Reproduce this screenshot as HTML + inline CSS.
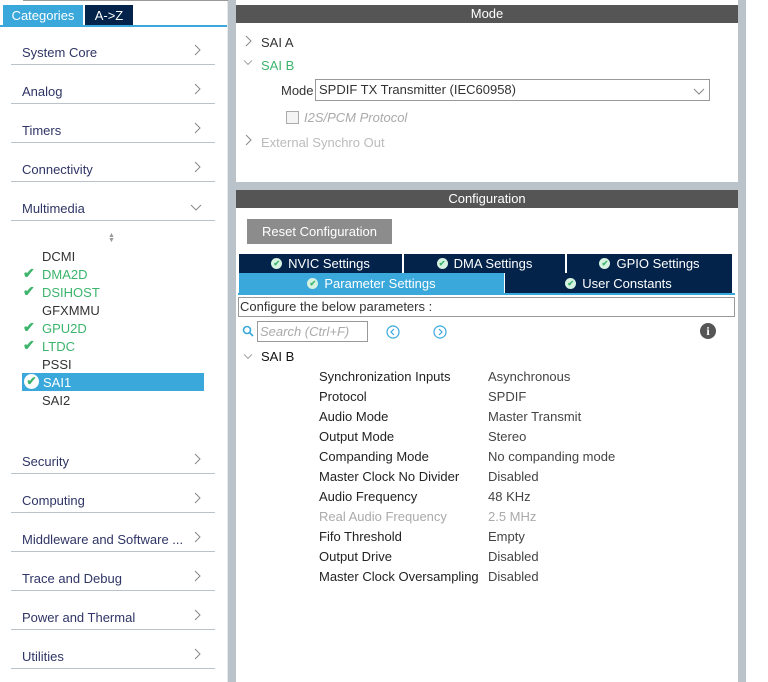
<!DOCTYPE html><html><head><style>
body{margin:0;width:768px;height:682px;position:relative;background:#fff;font-family:"Liberation Sans",sans-serif;overflow:hidden}
.a{position:absolute}
.cat{position:absolute;left:22px;font-size:13px;color:#2f3566}
.ln{position:absolute;left:11px;width:204px;height:1px;background:#b9c3c9}
.chev{position:absolute;left:192px;width:10px;height:12px}
.sub{position:absolute;left:42px;font-size:13px;color:#333}
.g{color:#3cb46c}
.ck{position:absolute;left:23px;font-size:14px;color:#3cb46c;font-weight:bold}
.tab{position:absolute;height:19px;background:#03234b;color:#fff;font-size:13px;display:flex;align-items:center;justify-content:center}
.dot{display:inline-block;width:11px;height:11px;border-radius:50%;background:#d6f2e0;color:#3cb46c;font-size:8px;line-height:11px;text-align:center;margin-right:6px;font-weight:bold}
.pl{position:absolute;left:319px;font-size:13px;color:#222}
.pv{position:absolute;left:488px;font-size:13px;color:#444}
</style></head><body>
<svg width="0" height="0" style="position:absolute"><defs>
<symbol id="r" viewBox="0 0 10 12"><path d="M3 1 L8 6 L3 11" fill="none" stroke="#888" stroke-width="1"/></symbol>
<symbol id="d" viewBox="0 0 12 10"><path d="M1 3 L6 8 L11 3" fill="none" stroke="#888" stroke-width="1"/></symbol>
</defs></svg>
<div class="a" style="left:0;top:0;width:227px;height:682px;background:#fff;border-right:2px solid #e6e8ea"></div>
<div class="a" style="left:23px;top:0;width:205px;height:1px;background:#999"></div>
<div class="a" style="left:228px;top:0;width:8px;height:682px;background:#b9c3c9"></div>
<div class="a" style="left:738px;top:0;width:8px;height:682px;background:#b9c3c9"></div>
<div class="a" style="left:236px;top:182px;width:502px;height:8px;background:#b9c3c9"></div>
<div class="a" style="left:3px;top:5px;width:80px;height:21px;background:#3aa8db;color:#fff;font-size:13px;line-height:21px;text-align:center">Categories</div>
<div class="a" style="left:85px;top:5px;width:48px;height:21px;background:#03234b;color:#fff;font-size:13px;line-height:21px;text-align:center">A-&gt;Z</div>
<div class="a" style="left:0;top:25px;width:227px;height:2px;background:#3aa8db"></div>

<div class="cat" style="top:45px">System Core</div><svg class="chev" style="top:44px"><use href="#r"/></svg><div class="ln" style="top:64px"></div>
<div class="cat" style="top:84px">Analog</div><svg class="chev" style="top:83px"><use href="#r"/></svg><div class="ln" style="top:103px"></div>
<div class="cat" style="top:123px">Timers</div><svg class="chev" style="top:122px"><use href="#r"/></svg><div class="ln" style="top:142px"></div>
<div class="cat" style="top:162px">Connectivity</div><svg class="chev" style="top:161px"><use href="#r"/></svg><div class="ln" style="top:181px"></div>
<div class="cat" style="top:201px">Multimedia</div><svg class="a" style="left:190px;top:202px;width:12px;height:10px"><use href="#d"/></svg><div class="ln" style="top:220px"></div>
<div class="a" style="left:108px;top:233px;font-size:7px;color:#999;line-height:5px">▲<br>▼</div>
<div class="sub" style="top:249px">DCMI</div>
<div class="ck" style="top:265px">✔</div><div class="sub g" style="top:267px">DMA2D</div>
<div class="ck" style="top:283px">✔</div><div class="sub g" style="top:285px">DSIHOST</div>
<div class="sub" style="top:303px">GFXMMU</div>
<div class="ck" style="top:319px">✔</div><div class="sub g" style="top:321px">GPU2D</div>
<div class="ck" style="top:337px">✔</div><div class="sub g" style="top:339px">LTDC</div>
<div class="sub" style="top:357px">PSSI</div>
<div class="a" style="left:22px;top:373px;width:182px;height:18px;background:#3aa8db"></div>
<div class="a" style="left:24px;top:374px;width:15px;height:15px;border-radius:50%;background:#fff;color:#3cb46c;font-size:12px;line-height:15px;text-align:center;font-weight:bold">✔</div>
<div class="sub" style="top:375px;left:43px;color:#fff">SAI1</div>
<div class="sub" style="top:393px">SAI2</div>

<div class="cat" style="top:454px">Security</div><svg class="chev" style="top:453px"><use href="#r"/></svg><div class="ln" style="top:473px"></div>
<div class="cat" style="top:493px">Computing</div><svg class="chev" style="top:492px"><use href="#r"/></svg><div class="ln" style="top:512px"></div>
<div class="cat" style="top:532px">Middleware and Software ...</div><svg class="chev" style="top:531px"><use href="#r"/></svg><div class="ln" style="top:551px"></div>
<div class="cat" style="top:571px">Trace and Debug</div><svg class="chev" style="top:570px"><use href="#r"/></svg><div class="ln" style="top:590px"></div>
<div class="cat" style="top:610px">Power and Thermal</div><svg class="chev" style="top:609px"><use href="#r"/></svg><div class="ln" style="top:629px"></div>
<div class="cat" style="top:649px">Utilities</div><svg class="chev" style="top:648px"><use href="#r"/></svg><div class="ln" style="top:668px"></div>

<div class="a" style="left:236px;top:5px;width:502px;height:18px;background:#545554;color:#fff;font-size:13px;line-height:18px;text-align:center">Mode</div>
<svg class="a" style="left:243px;top:35px;width:10px;height:12px"><use href="#r"/></svg><div class="a" style="left:261px;top:35px;font-size:13px;color:#333">SAI A</div>
<svg class="a" style="left:243px;top:58px;width:10px;height:8px" viewBox="0 0 12 10"><path d="M1 3 L6 8 L11 3" fill="none" stroke="#888"/></svg><div class="a" style="left:261px;top:58px;font-size:13px;color:#3cb46c">SAI B</div>
<div class="a" style="left:281px;top:83px;font-size:13px;color:#333">Mode</div>
<div class="a" style="left:315px;top:79px;border:1px solid #999;font-size:13px;line-height:20px;color:#333;padding-left:3px;box-sizing:border-box;width:395px;height:22px">SPDIF TX Transmitter (IEC60958)<svg style="position:absolute;right:4px;top:6px;width:12px;height:10px"><use href="#d"/></svg></div>
<div class="a" style="left:286px;top:111px;width:11px;height:11px;border:1px solid #aaa;background:#f4f4f4"></div>
<div class="a" style="left:304px;top:110px;font-size:13px;color:#aaa;font-style:italic">I2S/PCM Protocol</div>
<svg class="a" style="left:243px;top:134px;width:10px;height:12px"><use href="#r"/></svg><div class="a" style="left:261px;top:135px;font-size:13px;color:#bbb">External Synchro Out</div>

<div class="a" style="left:236px;top:190px;width:502px;height:18px;background:#545554;color:#fff;font-size:13px;line-height:18px;text-align:center">Configuration</div>
<div class="a" style="left:247px;top:219px;width:145px;height:25px;background:#8c8c8c;color:#fff;font-size:13px;line-height:25px;text-align:center">Reset Configuration</div>
<div class="tab" style="left:239px;top:254px;width:163px"><span class="dot">✔</span>NVIC Settings</div>
<div class="tab" style="left:404px;top:254px;width:161px"><span class="dot">✔</span>DMA Settings</div>
<div class="tab" style="left:567px;top:254px;width:165px"><span class="dot">✔</span>GPIO Settings</div>
<div class="tab" style="left:239px;top:273px;width:265px;height:20px;background:#3aa8db"><span class="dot">✔</span>Parameter Settings</div>
<div class="tab" style="left:505px;top:273px;width:227px;height:20px"><span class="dot">✔</span>User Constants</div>
<div class="a" style="left:238px;top:293px;width:497px;height:2px;background:#3aa8db"></div>
<div class="a" style="left:238px;top:297px;width:497px;height:20px;border:1px solid #999;box-sizing:border-box;font-size:13px;line-height:18px;color:#333;padding-left:1px">Configure the below parameters :</div>
<svg class="a" style="left:242px;top:325px;width:13px;height:13px"><circle cx="5" cy="5" r="3.5" fill="none" stroke="#3aa8db" stroke-width="1.6"/><path d="M7.5 7.5 L11 11" stroke="#3aa8db" stroke-width="1.8"/></svg>
<div class="a" style="left:257px;top:321px;width:111px;height:21px;border:1px solid #999;box-sizing:border-box;font-size:13px;color:#aaa;font-style:italic;line-height:19px;padding-left:2px">Search (Ctrl+F)</div>
<svg class="a" style="left:386px;top:325px;width:14px;height:14px"><circle cx="7" cy="7" r="6" fill="none" stroke="#3aa8db" stroke-width="1.2"/><path d="M8 4 L5 7 L8 10" fill="none" stroke="#3aa8db" stroke-width="1.2"/></svg>
<svg class="a" style="left:433px;top:325px;width:14px;height:14px"><circle cx="7" cy="7" r="6" fill="none" stroke="#3aa8db" stroke-width="1.2"/><path d="M6 4 L9 7 L6 10" fill="none" stroke="#3aa8db" stroke-width="1.2"/></svg>
<div class="a" style="left:700px;top:323px;width:16px;height:16px;border-radius:50%;background:#555;color:#fff;font-size:12px;font-weight:bold;line-height:16px;text-align:center;font-family:'Liberation Serif',serif">i</div>
<svg class="a" style="left:243px;top:352px;width:10px;height:8px" viewBox="0 0 12 10"><path d="M1 3 L6 8 L11 3" fill="none" stroke="#888"/></svg><div class="a" style="left:261px;top:349px;font-size:13px;color:#111">SAI B</div>
<div class="pl" style="top:369px">Synchronization Inputs</div><div class="pv" style="top:369px">Asynchronous</div>
<div class="pl" style="top:389px">Protocol</div><div class="pv" style="top:389px">SPDIF</div>
<div class="pl" style="top:409px">Audio Mode</div><div class="pv" style="top:409px">Master Transmit</div>
<div class="pl" style="top:429px">Output Mode</div><div class="pv" style="top:429px">Stereo</div>
<div class="pl" style="top:449px">Companding Mode</div><div class="pv" style="top:449px">No companding mode</div>
<div class="pl" style="top:469px">Master Clock No Divider</div><div class="pv" style="top:469px">Disabled</div>
<div class="pl" style="top:489px">Audio Frequency</div><div class="pv" style="top:489px">48 KHz</div>
<div class="pl" style="top:509px;color:#aaa">Real Audio Frequency</div><div class="pv" style="top:509px;color:#aaa">2.5 MHz</div>
<div class="pl" style="top:529px">Fifo Threshold</div><div class="pv" style="top:529px">Empty</div>
<div class="pl" style="top:549px">Output Drive</div><div class="pv" style="top:549px">Disabled</div>
<div class="pl" style="top:569px">Master Clock Oversampling</div><div class="pv" style="top:569px">Disabled</div>
</body></html>
